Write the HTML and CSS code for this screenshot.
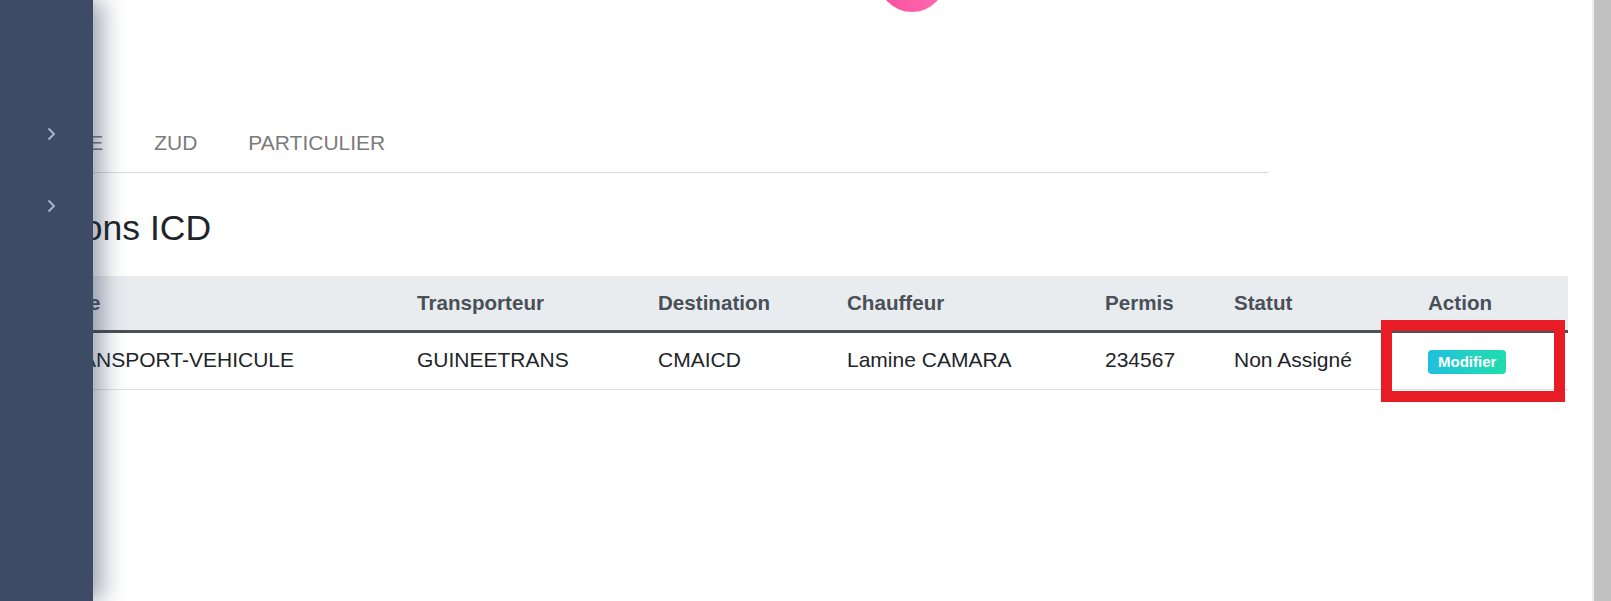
FILE: index.html
```html
<!DOCTYPE html>
<html lang="fr">
<head>
<meta charset="utf-8">
<title>Camions ICD</title>
<link rel="stylesheet" href="styles.css">
</head>
<body>
<div class="page">
  <aside class="sidebar">
    <ul class="side-menu">
      <li class="side-item"><svg class="chev" width="9" height="14" viewBox="0 0 9 14"><polyline points="1.5,1.5 7,7 1.5,12.5" fill="none" stroke="#a9b3c9" stroke-width="2"/></svg></li>
      <li class="side-item"><svg class="chev" width="9" height="14" viewBox="0 0 9 14"><polyline points="1.5,1.5 7,7 1.5,12.5" fill="none" stroke="#a9b3c9" stroke-width="2"/></svg></li>
    </ul>
  </aside>
  <main class="content">
    <header class="topbar">
      <div class="avatar"></div>
    </header>
    <nav class="tabs">
      <a class="tab">VRAQUE</a>
      <a class="tab">ZUD</a>
      <a class="tab">PARTICULIER</a>
    </nav>
    <h3 class="title">Camions ICD</h3>
    <table class="data">
      <thead>
        <tr>
          <th class="c-type">Type</th>
          <th class="c-trans">Transporteur</th>
          <th class="c-dest">Destination</th>
          <th class="c-chauf">Chauffeur</th>
          <th class="c-permis">Permis</th>
          <th class="c-statut">Statut</th>
          <th class="c-action">Action</th>
        </tr>
      </thead>
      <tbody>
        <tr>
          <td>TRANSPORT-VEHICULE</td>
          <td>GUINEETRANS</td>
          <td>CMAICD</td>
          <td>Lamine CAMARA</td>
          <td>234567</td>
          <td>Non Assigné</td>
          <td class="action-cell"><span class="badge">Modifier</span><span class="highlight"></span></td>
        </tr>
      </tbody>
    </table>
  </main>
</div>
<div class="scrollbar"></div>
</body>
</html>
```

FILE: styles.css
```css
html, body {
  margin: 0;
  padding: 0;
  height: 100%;
}
body {
  display: flex;
  overflow: hidden;
  background: #fff;
  font-family: "Liberation Sans", Arial, sans-serif;
  color: #212529;
}
.page {
  flex: 1;
  position: relative;
  overflow: hidden;
}
.scrollbar {
  width: 17px;
  border-left: 2px solid #ededed;
  background: #c1c1c1;
}
.sidebar {
  position: absolute;
  left: 0;
  top: 0;
  bottom: 0;
  width: 93px;
  background: #3e4b64;
  box-shadow: 9px 0 22px rgba(40, 52, 82, 0.45);
  z-index: 5;
}
.side-menu {
  list-style: none;
  margin: 0;
  padding: 127px 0 0 47px;
}
.side-item {
  height: 14px;
}
.side-item + .side-item {
  margin-top: 58px;
}
.chev {
  display: block;
}
.content {
  padding: 0 24px 0 0;
}
.topbar {
  height: 114px;
  display: flex;
  align-items: flex-start;
}
.avatar {
  width: 68px;
  height: 68px;
  margin-top: -56px;
  margin-left: 878px;
  border-radius: 50%;
  background: linear-gradient(90deg, #f2509c 0%, #ff5ea8 55%, #ff6ab0 100%);
}
.tabs {
  display: flex;
  margin-left: -11px;
  width: 1280px;
  border-bottom: 1px solid #dcdcdc;
}
.tab {
  padding: 17px 25.5px;
  font-size: 21px;
  line-height: 24px;
  color: #7b7b7b;
}
.title {
  margin: 34px 0 27px 0;
  font-size: 35.5px;
  font-weight: 400;
  line-height: 42px;
  color: #212529;
}
.data {
  margin-left: 39px;
  width: 1529px;
  border-collapse: collapse;
  font-size: 21px;
  line-height: 24px;
}
.data th,
.data td {
  padding: 15px;
  text-align: left;
  vertical-align: top;
}
.data th {
  background: #e9ecef;
  color: #495057;
  font-weight: 700;
  font-size: 20.6px;
  border-bottom: 3px solid #4b5157;
}
.data td {
  border-bottom: 1px solid #dee2e6;
}
.c-type { width: 333px; }
.c-trans { width: 211px; }
.c-dest { width: 159px; }
.c-chauf { width: 228px; }
.c-permis { width: 99px; }
.c-statut { width: 164px; }
.c-action { width: 125px; }
.action-cell {
  position: relative;
}
.badge {
  display: inline-block;
  padding: 4.5px 10px;
  font-size: 15px;
  line-height: 15px;
  font-weight: 700;
  color: #fff;
  border-radius: 4px;
  background: linear-gradient(90deg, #1fbfdf 0%, #22d3c0 60%, #1fdcae 100%);
}
.highlight {
  position: absolute;
  left: -32px;
  top: -13px;
  width: 184px;
  height: 82px;
  box-sizing: border-box;
  border: 11px solid #e81c24;
  z-index: 2;
}
```
